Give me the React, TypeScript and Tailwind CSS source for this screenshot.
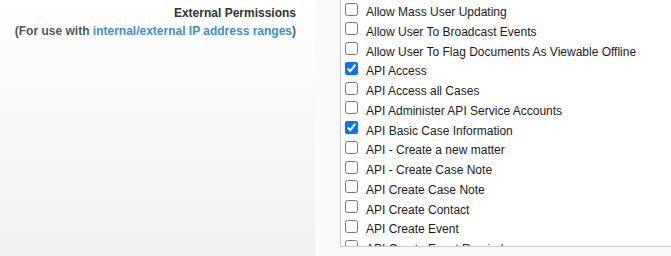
const permissions: { label: string; checked?: boolean }[] = [
  { label: 'Allow Mass User Updating' },
  { label: 'Allow User To Broadcast Events' },
  { label: 'Allow User To Flag Documents As Viewable Offline' },
  { label: 'API Access', checked: true },
  { label: 'API Access all Cases' },
  { label: 'API Administer API Service Accounts' },
  { label: 'API Basic Case Information', checked: true },
  { label: 'API - Create a new matter' },
  { label: 'API - Create Case Note' },
  { label: 'API Create Case Note' },
  { label: 'API Create Contact' },
  { label: 'API Create Event' },
  { label: 'API Create Event Reminder' },
  { label: 'API Create Note' },
]

export default function App() {
  return (
    <div className="flex h-[256px] w-[671px] overflow-hidden font-['Liberation_Sans',Arial,sans-serif] text-[12px]">
      {/* label column */}
      <div className="w-[315px] shrink-0 bg-gradient-to-b from-[#ffffff] to-[#f0f0f0] pr-[19px] pt-[4px] text-right font-bold">
        <div className="leading-[18px] text-[#333333]">External Permissions</div>
        <div className="leading-[18px] text-[#555555]">
          (For use with <span className="text-[#3d8fc9]">internal/external IP address ranges</span>)
        </div>
      </div>

      {/* value column */}
      <div className="flex-1 bg-[#fafafa] pl-[25px]">
        <div className="h-[247px] w-[380px] overflow-hidden border-b border-l border-[#c8c8c8] bg-[#ffffff]">
          <ul className="mt-[2px] pl-[4px]">
            {permissions.map((p) => (
              <li key={p.label} className="flex h-[19.75px] items-start gap-[8px] leading-[19.75px] text-[#1a1a1a]">
                <input type="checkbox" readOnly checked={!!p.checked} className="m-0 mt-[0.5px] h-[13px] w-[13px] shrink-0" />
                <span className="whitespace-nowrap pt-[1px]">{p.label}</span>
              </li>
            ))}
          </ul>
        </div>
      </div>
    </div>
  )
}
